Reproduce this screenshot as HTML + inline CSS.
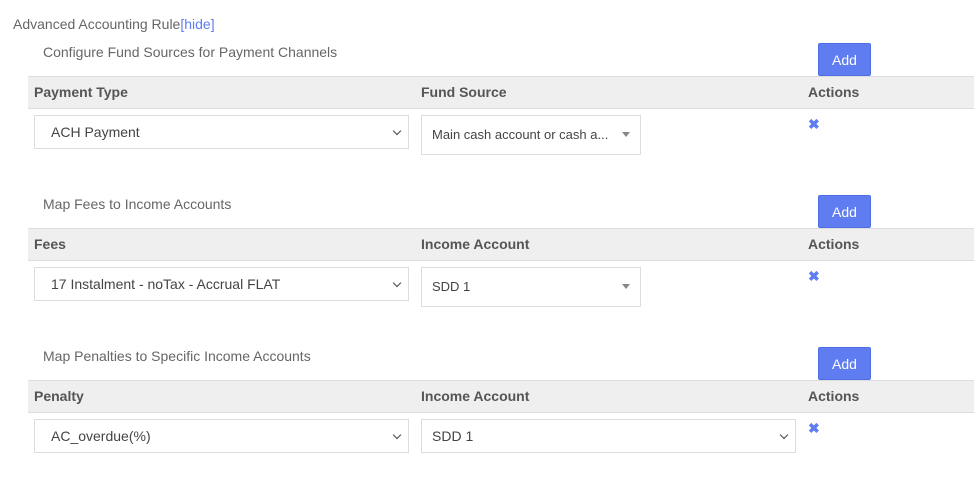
<!DOCTYPE html>
<html><head><style>
body{margin:0;width:974px;height:477px;background:#fff;font-family:"Liberation Sans",sans-serif;color:#555;position:relative;overflow:hidden}
.a{position:absolute}
.t{font-size:14px;color:#666}
.btn{background:#5f7cf0;color:#fff;border:1px solid #4f6de6;border-radius:2px;width:53px;height:33px;font-size:14px;text-align:center;line-height:32px;box-sizing:border-box}
.hd{left:28px;width:946px;height:33px;background:#efefef;border-top:1px solid #ddd;border-bottom:1px solid #ddd;box-sizing:border-box;font-size:14px;font-weight:bold;color:#555}
.hd span{position:absolute;top:7px}
.sel{border:1px solid #ddd;box-sizing:border-box;font-size:14px;color:#444;background:#fff}
.sel span{position:absolute;left:16px;top:8px}
.chev{position:absolute;right:8px;width:5px;height:5px;border-right:1.5px solid #444;border-bottom:1.5px solid #444;transform:rotate(45deg);top:12px}
.s2 span{left:10px;top:11px;font-size:13px}
.tri{position:absolute;right:10px;top:16px;width:0;height:0;border-left:4px solid transparent;border-right:4px solid transparent;border-top:5px solid #888}
.x{color:#5f7cf0;font-size:14px;font-weight:bold}
</style></head><body>
<div class="a t" style="left:13px;top:16px">Advanced Accounting Rule<span style="color:#5f7cf0">[hide]</span></div>

<div class="a t" style="left:43px;top:44px">Configure Fund Sources for Payment Channels</div>
<div class="a btn" style="left:818px;top:43px">Add</div>
<div class="a hd" style="top:76px"><span style="left:6px">Payment Type</span><span style="left:393px">Fund Source</span><span style="left:780px">Actions</span></div>
<div class="a sel" style="left:34px;top:115px;width:375px;height:34px"><span>ACH Payment</span><i class="chev"></i></div>
<div class="a sel s2" style="left:421px;top:115px;width:220px;height:40px"><span>Main cash account or cash a...</span><i class="tri"></i></div>
<div class="a x" style="left:808px;top:116px">✖</div>

<div class="a t" style="left:43px;top:196px">Map Fees to Income Accounts</div>
<div class="a btn" style="left:818px;top:195px">Add</div>
<div class="a hd" style="top:228px"><span style="left:6px">Fees</span><span style="left:393px">Income Account</span><span style="left:780px">Actions</span></div>
<div class="a sel" style="left:34px;top:267px;width:375px;height:34px"><span>17 Instalment - noTax - Accrual FLAT</span><i class="chev"></i></div>
<div class="a sel s2" style="left:421px;top:267px;width:220px;height:40px"><span>SDD 1</span><i class="tri"></i></div>
<div class="a x" style="left:808px;top:268px">✖</div>

<div class="a t" style="left:43px;top:348px">Map Penalties to Specific Income Accounts</div>
<div class="a btn" style="left:818px;top:347px">Add</div>
<div class="a hd" style="top:380px"><span style="left:6px">Penalty</span><span style="left:393px">Income Account</span><span style="left:780px">Actions</span></div>
<div class="a sel" style="left:34px;top:419px;width:375px;height:34px"><span>AC_overdue(%)</span><i class="chev"></i></div>
<div class="a sel" style="left:421px;top:419px;width:375px;height:34px"><span style="left:10px">SDD 1</span><i class="chev"></i></div>
<div class="a x" style="left:808px;top:420px">✖</div>
</body></html>
